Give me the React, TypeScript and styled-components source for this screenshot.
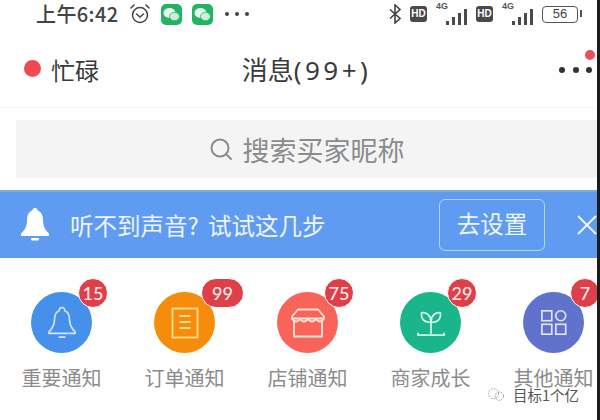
import React from 'react';
import styled, { createGlobalStyle } from 'styled-components';

const cjk = '"Noto Sans CJK SC", "Noto Sans", sans-serif';

const GlobalStyle = createGlobalStyle`
  html, body {
    margin: 0;
    padding: 0;
    background: #fff;
  }
  * {
    box-sizing: border-box;
  }
`;

const Screen = styled.div`
  width: 600px;
  height: 420px;
  overflow: hidden;
  position: relative;
  background: #fefefe;
  border-right: 3px solid #1c1c1c;
  font-family: ${cjk};
  color: #333;
`;

const StatusBar = styled.div`
  height: 28px;
  display: flex;
  align-items: center;
  padding: 0 12px 0 36px;
  color: #444;
`;

const Clock = styled.span`
  font-size: 20px;
  font-weight: 500;
  line-height: 28px;
  letter-spacing: 0.4px;
`;

const StatusLeft = styled.div`
  display: flex;
  align-items: center;
  gap: 10px;
  margin-left: 10px;
`;

const ChatIcon = styled.div`
  width: 21px;
  height: 21px;
  border-radius: 5px;
  background: #22b364;
  display: flex;
  align-items: center;
  justify-content: center;
`;

const TinyDots = styled.div`
  display: flex;
  gap: 6px;
  margin-left: 2px;
`;

const TinyDot = styled.i`
  width: 4px;
  height: 4px;
  border-radius: 50%;
  background: #444;
`;

const StatusRight = styled.div`
  margin-left: auto;
  display: flex;
  align-items: center;
  gap: 9px;
`;

const HdTag = styled.div`
  width: 17px;
  height: 16px;
  border-radius: 3px;
  background: #4a4a4a;
  color: #fff;
  font: 700 10px/16px "Liberation Sans", sans-serif;
  text-align: center;
`;

const Signal = styled.div`
  position: relative;
  width: 31px;
  height: 22px;
  display: flex;
  align-items: flex-end;
  justify-content: flex-end;
  gap: 3px;
`;

const SignalLabel = styled.span`
  position: absolute;
  left: 0;
  top: -2px;
  font: 700 9px/10px "Liberation Sans", sans-serif;
  color: #555;
`;

const SignalBar = styled.i<{ $h: number }>`
  display: block;
  width: 3px;
  height: ${p => p.$h}px;
  background: #4a4a4a;
`;

const Battery = styled.div`
  width: 36px;
  height: 17px;
  border: 1.5px solid #555;
  border-radius: 4px;
  color: #444;
  font: 400 13px/14px "Liberation Sans", sans-serif;
  text-align: center;
  position: relative;
  margin-right: 7px;
  &::after {
    content: '';
    position: absolute;
    right: -5px;
    top: 3px;
    width: 2px;
    height: 7px;
    background: #555;
  }
`;

const Header = styled.div`
  height: 63px;
  margin-top: 17px;
  padding: 0 5px 12px 24px;
  display: grid;
  grid-template-columns: 1fr auto 1fr;
  align-items: center;
  font-size: 24px;
  color: #3a3a3a;
  border-bottom: 1px solid #f4f4f4;
`;

const StatusDot = styled.span`
  width: 17px;
  height: 17px;
  border-radius: 50%;
  background: #f04a50;
  margin-top: -4px;
`;

const BusyState = styled.div`
  display: flex;
  align-items: center;
  gap: 10px;
  line-height: 30px;
`;

const Title = styled.div`
  font-family: "Noto Sans", ${cjk};
  font-size: 26px;
  line-height: 30px;
  margin-right: 3px;
`;

const TitleCount = styled.span`
  letter-spacing: 3.5px;
`;

const More = styled.div`
  position: relative;
  justify-self: end;
  display: flex;
  gap: 7.5px;
`;

const MoreDot = styled.i`
  width: 6px;
  height: 6px;
  border-radius: 50%;
  background: #333;
`;

const MoreBadge = styled.span`
  position: absolute;
  right: -3px;
  top: -17px;
  width: 10px;
  height: 10px;
  border-radius: 50%;
  background: #e8505a;
`;

const SearchWrap = styled.div`
  margin-top: 12px;
  padding-left: 16px;
`;

const SearchBox = styled.div`
  height: 58px;
  background: #f4f4f5;
  display: flex;
  align-items: center;
  justify-content: center;
  gap: 10px;
  font-size: 27px;
  color: #8b8b8d;
`;

const Banner = styled.div`
  margin-top: 12px;
  height: 68px;
  background: #5f9bf0;
  border-top: 2px solid #7fa9d8;
  display: flex;
  align-items: center;
  padding-left: 20px;
  color: #eef5ff;
`;

const BannerText = styled.span`
  margin-left: 20px;
  font-size: 23.5px;
  line-height: 30px;
  word-spacing: 4px;
`;

const SetupButton = styled.div`
  margin-left: auto;
  width: 106px;
  height: 52px;
  border: 1.5px solid #b7d3f5;
  border-radius: 6px;
  font-size: 23.5px;
  line-height: 47px;
  text-align: center;
`;

const CloseIcon = styled.svg`
  width: 20px;
  height: 20px;
  margin: 0 0 0 32px;
  flex: none;
`;

const Categories = styled.div`
  display: grid;
  grid-template-columns: repeat(5, 123px);
  padding-top: 34px;
`;

const Category = styled.div`
  display: flex;
  flex-direction: column;
  align-items: center;
  gap: 16px;
`;

const IconCircle = styled.div<{ $color: string }>`
  position: relative;
  width: 61px;
  height: 61px;
  border-radius: 50%;
  background: ${p => p.$color};
  display: flex;
  align-items: center;
  justify-content: center;
`;

const CountBadge = styled.span<{ $wide?: boolean }>`
  position: absolute;
  top: -14px;
  left: 47px;
  width: ${p => (p.$wide ? '43px' : '30px')};
  height: 30px;
  border-radius: 15px;
  background: #dd4048;
  border: 1px solid #fff;
  color: #fbe9e9;
  font: 500 18px/28px "Lato", "Noto Sans", sans-serif;
  text-align: center;
`;

const CategoryLabel = styled.span`
  font-size: 20px;
  line-height: 18px;
  color: #8c8c8c;
  white-space: nowrap;
`;

const Watermark = styled.div`
  position: absolute;
  left: 485px;
  top: 387px;
  display: flex;
  align-items: center;
  gap: 6px;
  font-size: 14.5px;
  line-height: 15px;
  color: #555;
`;

const WeChatGlyph = () => (
  <svg width="17" height="15" viewBox="0 0 17 15" fill="#e8f8ee">
    <ellipse cx="6.5" cy="6" rx="6" ry="5" />
    <ellipse cx="11.5" cy="9.5" rx="5" ry="4.2" fill="#cdeedb" stroke="#22b364" strokeWidth="0.8" />
  </svg>
);

const AlarmIcon = () => (
  <svg width="22" height="22" viewBox="0 0 22 22" fill="none" stroke="#444" strokeWidth="1.5" strokeLinecap="round">
    <circle cx="11" cy="12" r="7.5" />
    <path d="M7.5 11l3.5 3 3.5-3" />
    <path d="M2 5l3-3M20 5l-3-3" />
  </svg>
);

const BluetoothIcon = () => (
  <svg width="12" height="20" viewBox="0 0 12 20" fill="none" stroke="#444" strokeWidth="1.6">
    <path d="M1 5.5l10 9-5 4.5V1l5 4.5-10 9" />
  </svg>
);

const BellSolid = () => (
  <svg width="30" height="36" viewBox="0 0 30 36" fill="#fff">
    <circle cx="15" cy="3.5" r="2.5" />
    <path d="M15 3c-5.5 0-8 4.5-8 10 0 6-2 10-6 13.5V29h28v-2.500c-4-3.500-6-7.500-6-13.500 0-5.500-2.500-10-8-10z" />
    <rect x="11" y="31" width="8" height="2.500" rx="1.200" />
  </svg>
);

const SearchIcon = () => (
  <svg width="24" height="24" viewBox="0 0 24 24" fill="none" stroke="#8b8b8d" strokeWidth="2" strokeLinecap="round">
    <circle cx="11" cy="11" r="8.500" />
    <path d="M17.500 17.500L22 22" />
  </svg>
);

const BellLine = () => (
  <svg width="30" height="35" viewBox="0 0 32 36" fill="none" stroke="#d5e6fb" strokeWidth="1.800" strokeLinejoin="round">
    <path d="M16 2c-2 0-3 1.500-3 3.500C9 7 8 11 8 15c0 5-2 9-6 13v1.500h28V28c-4-4-6-8-6-13 0-4-1-8-5-9.500C19 3.500 18 2 16 2z" />
    <path d="M13 33.500h6" strokeLinecap="round" />
  </svg>
);

const OrderIcon = () => (
  <svg width="28" height="32" viewBox="0 0 28 32" fill="none" stroke="#ffdf8f" strokeWidth="1.800">
    <rect x="1.500" y="1.500" width="25" height="29" />
    <path d="M8.500 9h11M8.500 15h11M8.500 21h11" />
  </svg>
);

const ShopIcon = () => (
  <svg width="36" height="30" viewBox="0 0 36 30" fill="none" stroke="#ffe3d6" strokeWidth="1.800" strokeLinejoin="round">
    <path d="M8 1.500h20l6 7v2H2v-2z" />
    <path d="M4 13v15.500h28V13" />
    <path d="M2 10.500c2.500 4 6 4 8 0 2 4 6 4 8 0 2 4 6 4 8 0 2 4 5.500 4 8 0" />
  </svg>
);

const SproutIcon = () => (
  <svg width="30" height="28" viewBox="0 0 32 30" fill="none" stroke="#d9f7ea" strokeWidth="1.800" strokeLinecap="round">
    <path d="M16 26V13" />
    <path d="M16 14c-7 1-11-3-10-10 5-1 10 3 10 10z" />
    <path d="M16 14c7 1 11-3 10-10-5-1-10 3-10 10z" />
    <path d="M2 26v2h28v-2" />
  </svg>
);

const GridIcon = () => (
  <svg width="28" height="27" viewBox="0 0 30 30" fill="none" stroke="#e3e6fa" strokeWidth="1.800">
    <rect x="1.500" y="2" width="11" height="11" />
    <circle cx="22.500" cy="7.500" r="5.500" />
    <rect x="1.500" y="17" width="11" height="11" />
    <rect x="17" y="17" width="11" height="11" />
  </svg>
);

const WatermarkIcon = () => (
  <svg width="22" height="15" viewBox="0 0 22 18" fill="none" stroke="#9a9a9a" strokeWidth="1.200" strokeDasharray="2 1.500">
    <circle cx="8" cy="8" r="6" />
    <circle cx="15" cy="11" r="5" />
  </svg>
);

const categories = [
  { label: '重要通知', count: '15', color: '#4590ea', icon: <BellLine /> },
  { label: '订单通知', count: '99', color: '#f58c0b', icon: <OrderIcon />, wide: true },
  { label: '店铺通知', count: '75', color: '#f9645a', icon: <ShopIcon /> },
  { label: '商家成长', count: '29', color: '#1ab58a', icon: <SproutIcon /> },
  { label: '其他通知', count: '7', color: '#6172cc', icon: <GridIcon /> },
];

const signalHeights = [4, 8, 12, 16];

const SignalIcon = () => (
  <Signal>
    <SignalLabel>4G</SignalLabel>
    {signalHeights.map(h => (
      <SignalBar key={h} $h={h} />
    ))}
  </Signal>
);

export default function App() {
  return (
    <Screen>
      <GlobalStyle />
      <StatusBar>
        <Clock>上午6:42</Clock>
        <StatusLeft>
          <AlarmIcon />
          <ChatIcon><WeChatGlyph /></ChatIcon>
          <ChatIcon><WeChatGlyph /></ChatIcon>
          <TinyDots>
            <TinyDot />
            <TinyDot />
            <TinyDot />
          </TinyDots>
        </StatusLeft>
        <StatusRight>
          <BluetoothIcon />
          <HdTag>HD</HdTag>
          <SignalIcon />
          <HdTag>HD</HdTag>
          <SignalIcon />
          <Battery>56</Battery>
        </StatusRight>
      </StatusBar>

      <Header>
        <BusyState>
          <StatusDot />
          忙碌
        </BusyState>
        <Title>消息<TitleCount>(99+)</TitleCount></Title>
        <More>
          <MoreBadge />
          <MoreDot />
          <MoreDot />
          <MoreDot />
        </More>
      </Header>

      <SearchWrap>
        <SearchBox>
          <SearchIcon />
          搜索买家昵称
        </SearchBox>
      </SearchWrap>

      <Banner>
        <BellSolid />
        <BannerText>听不到声音? 试试这几步</BannerText>
        <SetupButton>去设置</SetupButton>
        <CloseIcon viewBox="0 0 20 20" stroke="#eef5ff" strokeWidth="2">
          <path d="M1 1l18 18M19 1L1 19" />
        </CloseIcon>
      </Banner>

      <Categories>
        {categories.map(c => (
          <Category key={c.label}>
            <IconCircle $color={c.color}>
              {c.icon}
              <CountBadge $wide={c.wide}>{c.count}</CountBadge>
            </IconCircle>
            <CategoryLabel>{c.label}</CategoryLabel>
          </Category>
        ))}
      </Categories>

      <Watermark>
        <WatermarkIcon />
        目标1个亿
      </Watermark>
    </Screen>
  );
}
